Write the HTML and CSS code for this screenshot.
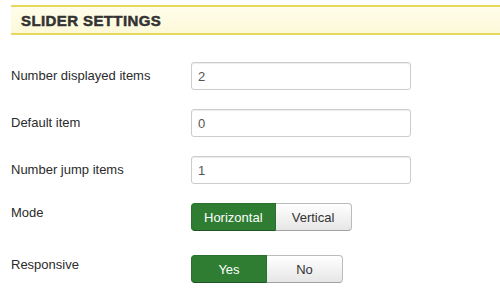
FILE: index.html
```html
<!DOCTYPE html>
<html lang="en">
<head>
    <meta charset="UTF-8">
    <meta name="viewport" content="width=device-width, initial-scale=1.0">
    <title>Slider settings</title>
    <link rel="stylesheet" href="styles.css">
</head>
<body>
    <div class="panel">
        <h3 class="panel-title">SLIDER SETTINGS</h3>

        <div class="row">
            <label class="row-label" for="items">Number displayed items</label>
            <input type="text" class="field" id="items" value="2">
        </div>
        <div class="row">
            <label class="row-label" for="default">Default item</label>
            <input type="text" class="field" id="default" value="0">
        </div>
        <div class="row">
            <label class="row-label" for="jump">Number jump items</label>
            <input type="text" class="field" id="jump" value="1">
        </div>
        <div class="row row-toggle">
            <span class="row-label">Mode</span>
            <div class="btn-group">
                <button class="btn active">Horizontal</button>
                <button class="btn">Vertical</button>
            </div>
        </div>
        <div class="row row-toggle">
            <span class="row-label">Responsive</span>
            <div class="btn-group">
                <button class="btn active">Yes</button>
                <button class="btn">No</button>
            </div>
        </div>
    </div>
</body>
</html>
```

FILE: styles.css
```css
body {
    margin: 0;
    font-family: "Liberation Sans", Arial, sans-serif;
    font-size: 13px;
    color: #333;
    background: #fff;
}
.panel {
    padding: 5px 0 0 11px;
}
.panel-title {
    margin: 0 0 27px;
    height: 26px;
    padding: 0 10px;
    border-top: 2px solid #e6d85c;
    border-bottom: 2px solid #e6d85c;
    background: linear-gradient(#fffdea, #fcf9d9);
    font-size: 15px;
    font-weight: bold;
    line-height: 27px;
    color: #333;
    letter-spacing: 0.4px;
    -webkit-text-stroke: 0.5px #333;
}
.row {
    display: flex;
    align-items: flex-start;
    margin-bottom: 19px;
}
.row-toggle {
    margin-bottom: 24px;
}
.row-label {
    width: 180px;
    padding-top: 5px;
    line-height: 18px;
    color: #2b2b2b;
}
.row-toggle .row-label {
    padding-top: 1px;
}
.field {
    box-sizing: border-box;
    width: 220px;
    height: 28px;
    margin: 0;
    padding: 4px 6px;
    border: 1px solid #ccc;
    border-radius: 3px;
    box-shadow: inset 0 1px 1px rgba(0, 0, 0, 0.075);
    font-family: inherit;
    font-size: 13px;
    color: #555;
}
.btn-group {
    display: flex;
}
.btn {
    box-sizing: border-box;
    min-width: 76px;
    height: 28px;
    padding: 0 12px;
    border: 1px solid #bbb;
    border-bottom-color: #a2a2a2;
    background: linear-gradient(#fff, #e6e6e6);
    font-family: inherit;
    font-size: 13px;
    color: #333;
    cursor: pointer;
}
.btn:first-child {
    border-radius: 4px 0 0 4px;
}
.btn:last-child {
    border-left: none;
    border-radius: 0 4px 4px 0;
}
.btn.active {
    background: #2f7d32;
    border-color: #2a6f2d;
    border-bottom-color: #1f5422;
    color: #fff;
}
```
